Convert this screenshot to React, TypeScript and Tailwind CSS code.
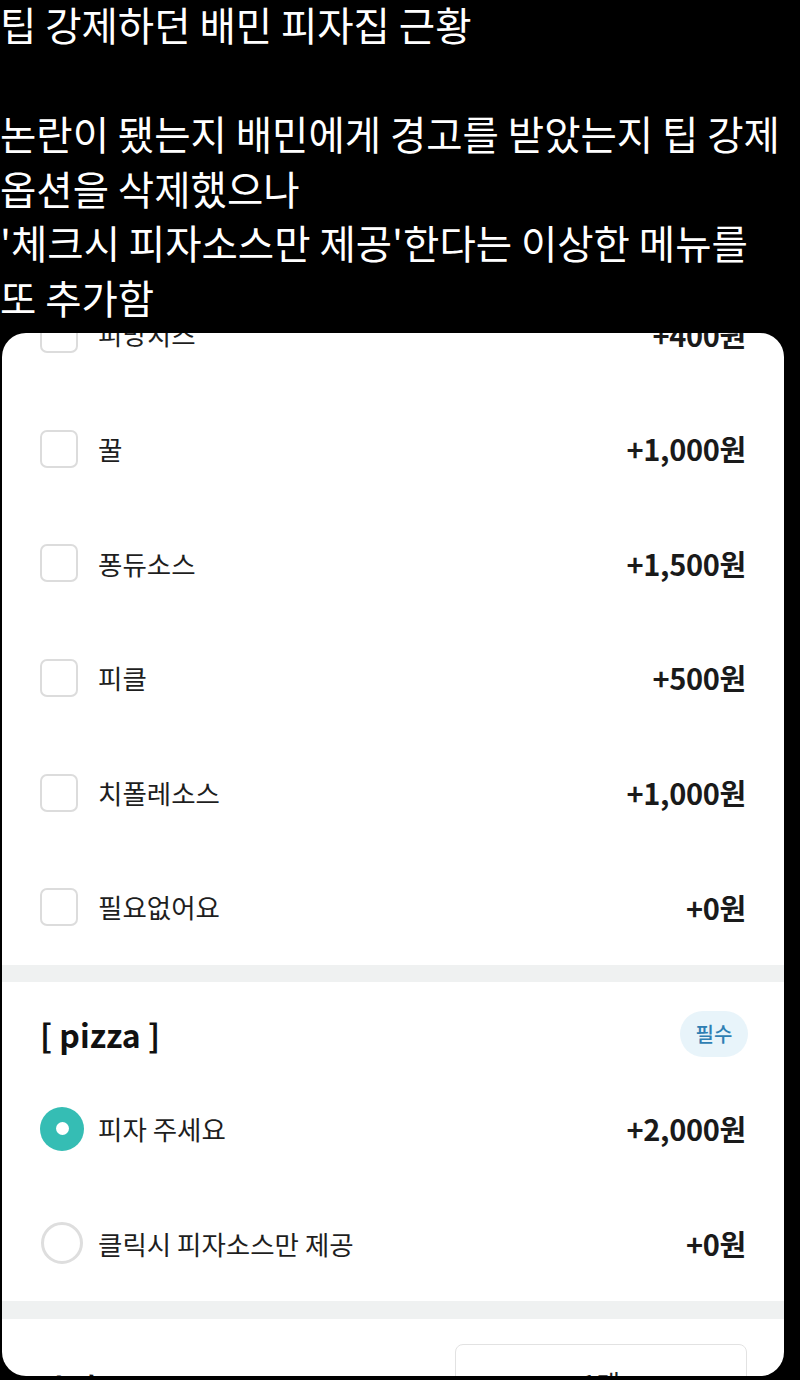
const font = { fontFamily: '"Noto Sans CJK KR", "Noto Sans", sans-serif' };

const toppings = [
  { name: '피망치즈', price: '+400원' },
  { name: '꿀', price: '+1,000원' },
  { name: '퐁듀소스', price: '+1,500원' },
  { name: '피클', price: '+500원' },
  { name: '치폴레소스', price: '+1,000원' },
  { name: '필요없어요', price: '+0원' },
];

const pizzaOptions = [
  { name: '피자 주세요', price: '+2,000원', checked: true },
  { name: '클릭시 피자소스만 제공', price: '+0원', checked: false },
];

function Checkbox() {
  return <div className="w-[38px] h-[38px] rounded-[7px] border-2 border-[#dcdcdc] bg-white shrink-0" />;
}

function Radio({ checked }: { checked: boolean }) {
  if (checked) {
    return (
      <div className="w-[44px] h-[44px] rounded-full bg-[#35bdb4] flex items-center justify-center shrink-0">
        <div className="w-[13px] h-[13px] rounded-full bg-white" />
      </div>
    );
  }
  return <div className="w-[42px] h-[42px] ml-[1px] rounded-full border-[3px] border-[#dedede] bg-white shrink-0" />;
}

function OptionRow({
  name,
  price,
  control,
}: {
  name: string;
  price: string;
  control: React.ReactNode;
}) {
  return (
    <div className="h-[114.6px] flex items-center pl-[38px] pr-[38px]">
      <div className="w-[45px] flex items-center">{control}</div>
      <span className="ml-[13px] text-[26.5px] text-[#1e1e1e]">{name}</span>
      <span className="ml-auto text-[29px] font-bold text-[#1a1a1a] tracking-[-0.3px]">{price}</span>
    </div>
  );
}

export default function App() {
  return (
    <div className="w-[800px] h-[1380px] bg-black overflow-hidden" style={font}>
      <div className="-mt-[3px] text-white text-[39.5px] leading-[54.5px] whitespace-nowrap">
        <p>팁 강제하던 배민 피자집 근황</p>
        <p>&nbsp;</p>
        <p>논란이 됐는지 배민에게 경고를 받았는지 팁 강제</p>
        <p>옵션을 삭제했으나</p>
        <p>'체크시 피자소스만 제공'한다는 이상한 메뉴를</p>
        <p>또 추가함</p>
      </div>

      <div className="ml-[2px] w-[782px] h-[1043px] mt-[9px] bg-white rounded-[24px] overflow-hidden">
        <div className="-mt-[56px]">
          {toppings.map((t) => (
            <OptionRow key={t.name} name={t.name} price={t.price} control={<Checkbox />} />
          ))}
        </div>

        <div className="h-[17px] bg-[#eff1f1]" />

        <div className="pt-[28px] pb-[14px] pl-[38px] pr-[36px] flex items-center justify-between">
          <h3 className="text-[32px] font-bold text-[#111]">[ pizza ]</h3>
          <span className="h-[46px] w-[68px] rounded-full bg-[#e8f4fa] text-[#2f7fb3] text-[20px] font-medium flex items-center justify-center">
            필수
          </span>
        </div>

        {pizzaOptions.map((o) => (
          <OptionRow key={o.name} name={o.name} price={o.price} control={<Radio checked={o.checked} />} />
        ))}

        <div className="h-[18px] bg-[#eff1f1]" />

        <div className="pt-[25px] pl-[44px] pr-[37px] flex items-start justify-between">
          <span className="mt-[22px] text-[28px] font-bold text-[#111]">수량</span>
          <div className="w-[292px] h-[70px] rounded-[8px] border border-[#e2e2e2] flex items-center justify-between px-[22px] pt-[8px] text-[26px] text-[#222]">
            <span className="text-[#cfcfcf]">−</span>
            <span>1개</span>
            <span>+</span>
          </div>
        </div>
      </div>
    </div>
  );
}
